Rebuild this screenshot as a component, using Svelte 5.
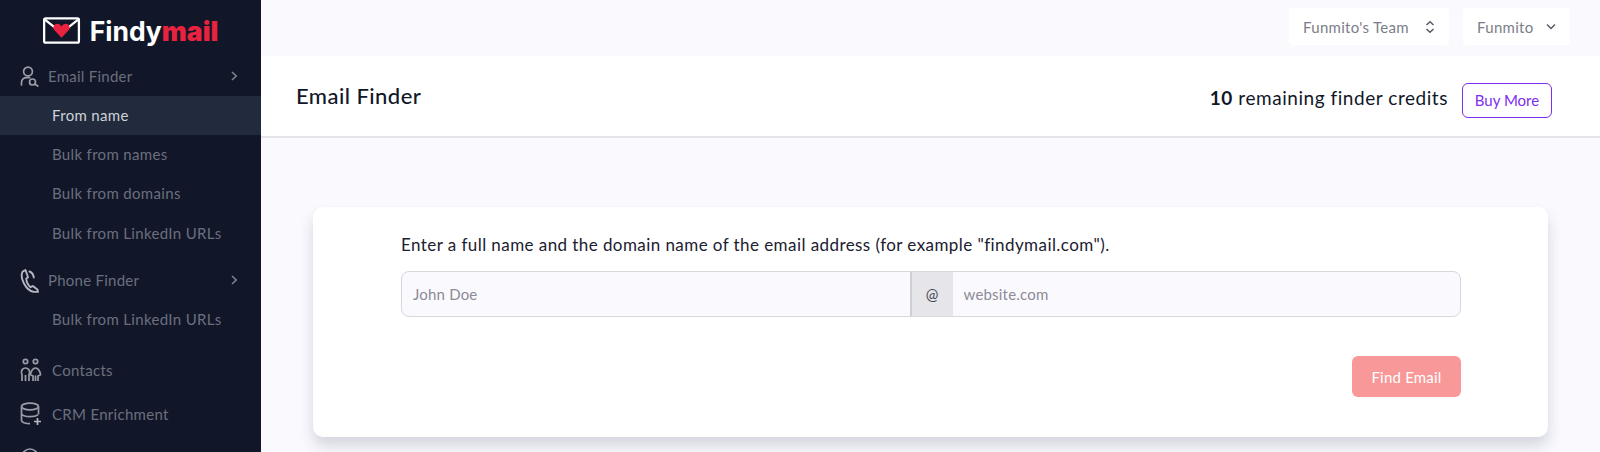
<script lang="ts">
  const finderLinks = ['Bulk from names', 'Bulk from domains', 'Bulk from LinkedIn URLs'];
</script>

<div class="page">
  <aside class="sidebar">
    <div class="logo">
      <svg width="38" height="27" viewBox="0 0 40 28" fill="none">
        <rect x="1.200" y="1.200" width="36.600" height="25.600" rx="1.500" fill="#111729" stroke="#fff" stroke-width="2.400" />
        <path d="M2 2.500l12 9.500M37 2.500L25 12" stroke="#fff" stroke-width="2.400" />
        <path d="M19.500 21.500L11.800 13.500C9.800 10.500 11.800 7 15 7c2 0 3.500 1 4.500 3 1-2 2.500-3 4.500-3 3.200 0 5.200 3.500 3.200 6.500z" fill="#e8223f" />
      </svg>
      <span class="wordmark">Findy<b>mail</b></span>
    </div>

    <div class="section">
      <svg class="ico" width="20" height="24" viewBox="0 0 20 24" fill="none" stroke="#9a9da6" stroke-width="1.700">
        <circle cx="8" cy="6.500" r="4.400" />
        <path d="M1.500 20v-2.500c0-3 2.400-4.800 5-4.800h3" stroke-linecap="round" />
        <circle cx="12.500" cy="17" r="3" />
        <path d="M15 19.200l2.800 1.800" stroke-linecap="round" />
      </svg>
      <span>Email Finder</span>
      <svg class="chev" width="10" height="12" viewBox="0 0 10 12" fill="none" stroke="#7d818c" stroke-width="1.600"><path d="M3 2l4.200 4L3 10" /></svg>
    </div>
    <a class="sub active" href="#from">From name</a>
    {#each finderLinks as link}
      <a class="sub" href="#bulk">{link}</a>
    {/each}

    <div class="section phone">
      <svg class="ico" width="20" height="26" viewBox="0 0 20 26" fill="none" stroke="#b5b8c0" stroke-width="1.900">
        <path d="M5.500 2L2.600 3.600C1 6.500 1.600 11 4 15.500c2.300 4.300 6 7.800 9.500 8.200l4.500.2-.6-2.300-4.600-3.600-2.200 1.200C8.300 17.500 6.500 13.500 6.200 10.700L8 9.300z" stroke-linejoin="round" />
        <path d="M9.500 3.500c2.500 1 4 3.500 4.300 6" stroke-linecap="round" />
      </svg>
      <span>Phone Finder</span>
      <svg class="chev" width="10" height="12" viewBox="0 0 10 12" fill="none" stroke="#7d818c" stroke-width="1.600"><path d="M3 2l4.200 4L3 10" /></svg>
    </div>
    <a class="sub" href="#phone">Bulk from LinkedIn URLs</a>

    <a class="item contacts" href="#contacts">
      <svg class="ico" width="22" height="24" viewBox="0 0 22 24" fill="none" stroke="#9a9da6" stroke-width="1.700">
        <circle cx="5.500" cy="3.500" r="2.200" />
        <circle cx="15.500" cy="3.500" r="2.200" />
        <path d="M2 23v-6.500L1.500 15c-.5-3 1.500-5 4-5s4.500 2 4 5L9 16.500V23M5.500 17v6" stroke-linejoin="round" />
        <path d="M13 23v-5l-2.500-1.200c.3-3.800 2.500-6.800 5-6.800s4.700 3 5 6.800L18 18v5M15.500 17.500V23" stroke-linejoin="round" />
      </svg>
      <span>Contacts</span>
    </a>
    <a class="item" href="#crm">
      <svg class="ico" width="22" height="24" viewBox="0 0 22 24" fill="none" stroke="#9a9da6" stroke-width="1.700">
        <ellipse cx="10" cy="4.500" rx="8.500" ry="3.300" />
        <path d="M1.500 4.500v14c0 1.800 3.800 3.200 8.500 3.200M18.500 4.500v8M1.500 11.500c0 1.800 3.800 3.200 8.500 3.200 3 0 6-.5 8-1.700" />
        <path d="M17.500 16v7M14 19.500h7" stroke="#b5b8c0" />
      </svg>
      <span>CRM Enrichment</span>
    </a>
    <a class="item" href="#verifier">
      <svg class="ico" width="22" height="24" viewBox="0 0 22 24" fill="none" stroke="#9a9da6" stroke-width="1.700">
        <circle cx="10" cy="11" r="8" />
      </svg>
      <span>Email Verifier</span>
    </a>
  </aside>

  <main class="main">
    <div class="topbar">
      <button class="select team">
        Funmito's Team
        <svg width="10" height="14" viewBox="0 0 10 14" fill="none" stroke="#555a66" stroke-width="1.500"><path d="M1.500 5L5 1.800 8.500 5M1.500 9L5 12.200 8.500 9" /></svg>
      </button>
      <button class="select user">
        Funmito
        <svg width="10" height="8" viewBox="0 0 10 8" fill="none" stroke="#555a66" stroke-width="1.500"><path d="M1 1.500L5 5.500l4-4" /></svg>
      </button>
    </div>

    <header class="head">
      <h1>Email Finder</h1>
      <div class="credits">
        <span><b>10</b> remaining finder credits</span>
        <button class="buy">Buy More</button>
      </div>
    </header>

    <section class="card">
      <p>Enter a full name and the domain name of the email address (for example "findymail.com").</p>
      <div class="inputs">
        <input placeholder="John Doe" />
        <span class="at">@</span>
        <input placeholder="website.com" />
      </div>
      <div class="actions">
        <button class="find">Find Email</button>
      </div>
    </section>
  </main>
</div>

<style>
  :global(body) {
    margin: 0;
    overflow: hidden;
    background: #f9f9fe;
  }
  .page {
    display: flex;
    height: 452px;
    overflow: hidden;
    font-family: Lato, 'Open Sans', sans-serif;
    font-size: 15px;
    color: #111729;
  }
  .sidebar {
    flex: 0 0 261px;
    background: #111729;
    display: flex;
    flex-direction: column;
    color: #6b6f7d;
    overflow: hidden;
  }
  .logo {
    display: flex;
    align-items: center;
    justify-content: center;
    gap: 9px;
    height: 57px;
    padding-top: 4px;
    box-sizing: border-box;
    flex: none;
  }
  .wordmark {
    font-family: Inter, 'Liberation Sans', sans-serif;
    font-size: 26.500px;
    font-weight: 700;
    color: #fff;
  }
  .wordmark b {
    color: #e8223f;
  }
  .section {
    display: flex;
    align-items: center;
    height: 39px;
    padding: 0 23px 0 20px;
    gap: 8px;
    flex: none;
    letter-spacing: 0.25px;
  }
  .section span {
    margin-top: -2px;
  }
  .section .chev {
    margin-left: auto;
    margin-top: -1px;
    transform: translateX(1px);
  }
  .section.phone {
    margin-top: 8px;
  }
  .ico {
    flex: none;
  }
  .sub {
    display: flex;
    align-items: center;
    height: 39.300px;
    flex: none;
    box-sizing: border-box;
    padding: 0 0 2px 52px;
    color: #6b6f7d;
    text-decoration: none;
    letter-spacing: 0.33px;
  }
  .sub.active {
    background: #222a3d;
    color: #cfd1d7;
  }
  .item {
    display: flex;
    align-items: center;
    height: 44px;
    flex: none;
    padding-left: 20px;
    gap: 10px;
    color: #6b6f7d;
    text-decoration: none;
    letter-spacing: 0.3px;
  }
  .contacts {
    margin-top: 9px;
  }
  .main {
    flex: 1;
    min-width: 0;
    display: flex;
    flex-direction: column;
  }
  .topbar {
    display: flex;
    justify-content: flex-end;
    align-items: flex-start;
    gap: 14px;
    height: 56px;
    flex: none;
    padding: 8px 30px 0 0;
    box-sizing: border-box;
  }
  .select {
    display: flex;
    align-items: center;
    justify-content: space-between;
    height: 37px;
    border: 0;
    border-radius: 4px;
    background: #fff;
    font: inherit;
    font-size: 15px;
    letter-spacing: 0.3px;
    color: #7b7e89;
    padding: 0 14px;
    box-sizing: border-box;
  }
  .team {
    width: 160px;
  }
  .user {
    width: 107px;
  }
  .head {
    display: flex;
    align-items: center;
    justify-content: space-between;
    height: 82px;
    flex: none;
    box-sizing: border-box;
    background: #fff;
    border-bottom: 2px solid #e4e4e9;
    padding: 0 48px 0 35px;
  }
  h1 {
    margin: -2px 0 0;
    font-size: 22px;
    font-weight: 500;
    color: #111729;
    letter-spacing: 0.45px;
  }
  .credits {
    display: flex;
    align-items: center;
    gap: 14px;
    font-size: 19px;
    letter-spacing: 0.55px;
    padding-top: 4px;
  }
  .credits span {
    margin-top: -2px;
  }
  .buy {
    width: 90px;
    height: 35px;
    border: 1px solid #7c2ef0;
    border-radius: 6px;
    background: #fff;
    color: #7c2ef0;
    font: inherit;
    font-size: 15px;
    letter-spacing: 0;
    padding: 0;
    margin-top: 4px;
  }
  .card {
    margin: 69px 52px 0 52px;
    height: 230px;
    flex: none;
    box-sizing: border-box;
    background: #fff;
    border-radius: 10px;
    padding: 27px 87px 0 88px;
    box-shadow: 0 9px 14px rgba(40, 44, 70, 0.17);
  }
  .card p {
    margin: 0 0 15px;
    font-size: 17px;
    line-height: 22px;
    letter-spacing: 0.43px;
    color: #1b2030;
  }
  .inputs {
    display: flex;
    height: 46px;
    box-sizing: border-box;
    border: 1.500px solid #d6d6dd;
    border-radius: 8px;
    background: #faf9fe;
    overflow: hidden;
  }
  .inputs input {
    flex: 1;
    min-width: 0;
    border: 0;
    background: transparent;
    padding: 0 11px;
    font: inherit;
    font-size: 15px;
    letter-spacing: 0.2px;
    outline: none;
  }
  .inputs input::placeholder {
    color: #8a8c96;
    opacity: 1;
  }
  .at {
    flex: none;
    width: 41px;
    display: grid;
    place-items: center;
    background: #e6e6ea;
    border-left: 2px solid #cfcfd6;
    color: #444854;
    font-size: 15px;
  }
  .actions {
    display: flex;
    justify-content: flex-end;
    margin-top: 39px;
  }
  .find {
    width: 109px;
    height: 41px;
    border: 0;
    border-radius: 6px;
    background: #f89898;
    color: #fff;
    font: inherit;
    font-size: 15px;
    letter-spacing: 0.2px;
  }
</style>
